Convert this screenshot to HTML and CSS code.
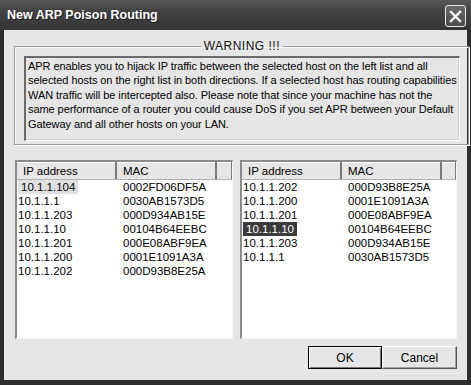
FILE: index.html
```html
<!DOCTYPE html>
<html lang="en">
<head>
    <meta charset="UTF-8">
    <title>New ARP Poison Routing</title>
    <link rel="stylesheet" href="styles.css">
</head>
<body>
<div class="window">
    <div class="titlebar">
        <span class="title">New ARP Poison Routing</span>
        <button class="close" aria-label="Close">
            <svg width="13" height="13" viewBox="0 0 13 13">
                <path d="M2 2 L11 11 M11 2 L2 11" stroke="#fff" stroke-width="2.4" stroke-linecap="square"/>
            </svg>
        </button>
    </div>
    <div class="client">
        <fieldset class="warning">
            <legend>WARNING !!!</legend>
            <div class="notice">
                APR enables you to hijack IP traffic between the selected host on the left list and all<br>
                selected hosts on the right list in both directions. If a selected host has routing capabilities<br>
                WAN traffic will be intercepted also. Please note that since your machine has not the<br>
                same performance of a router you could cause DoS if you set APR between your Default<br>
                Gateway and all other hosts on your LAN.
            </div>
        </fieldset>

        <div class="lists">
            <div class="listview" id="left-list"></div>
            <div class="listview" id="right-list"></div>
        </div>

        <div class="buttons">
            <button class="btn default">OK</button>
            <button class="btn">Cancel</button>
        </div>
    </div>
</div>

<script>
const leftHosts = [
    ["10.1.1.104", "0002FD06DF5A"],
    ["10.1.1.1", "0030AB1573D5"],
    ["10.1.1.203", "000D934AB15E"],
    ["10.1.1.10", "00104B64EEBC"],
    ["10.1.1.201", "000E08ABF9EA"],
    ["10.1.1.200", "0001E1091A3A"],
    ["10.1.1.202", "000D93B8E25A"]
];
const rightHosts = [
    ["10.1.1.202", "000D93B8E25A"],
    ["10.1.1.200", "0001E1091A3A"],
    ["10.1.1.201", "000E08ABF9EA"],
    ["10.1.1.10", "00104B64EEBC"],
    ["10.1.1.203", "000D934AB15E"],
    ["10.1.1.1", "0030AB1573D5"]
];

function fillList(id, hosts, selected, focused) {
    const list = document.getElementById(id);
    list.innerHTML = `
        <div class="lv-header">
            <div class="col ip">IP address</div>
            <div class="col mac">MAC</div>
            <div class="col rest"></div>
        </div>
    ` + hosts.map((h, i) => `
        <div class="lv-row">
            <div class="cell ip"><span class="${i === selected ? (focused ? 'sel focus' : 'sel') : ''}">${h[0]}</span></div>
            <div class="cell mac">${h[1]}</div>
        </div>
    `).join('');
}

fillList("left-list", leftHosts, 0, false);
fillList("right-list", rightHosts, 3, true);
</script>
</body>
</html>
```

FILE: styles.css
```css
body {
    margin: 0;
    font-family: "Liberation Sans", Arial, sans-serif;
    font-size: 11px;
    color: #000;
    background: #fff;
}
.window {
    width: 471px;
    height: 385px;
    display: flex;
    flex-direction: column;
    background: #2e2e2e;
    box-sizing: border-box;
}
.titlebar {
    height: 30px;
    flex: none;
    display: flex;
    align-items: center;
    justify-content: space-between;
    padding: 0 5px 0 7px;
    background: linear-gradient(#5a5a5a, #454545 30%, #3c3c3c 70%, #333);
}
.title {
    color: #fff;
    font-weight: bold;
    font-size: 12.5px;
    text-shadow: 1px 1px 0 #1e1e1e;
}
.close {
    width: 21px;
    height: 22px;
    margin-top: 2px;
    padding: 0;
    border: 1px solid #e8e8e8;
    border-radius: 3px;
    background: linear-gradient(#6a6a6a, #4a4a4a);
    display: flex;
    align-items: center;
    justify-content: center;
}
.client {
    flex: 1;
    margin: 0 4px 5px 4px;
    background: #e6e6e6;
    padding: 9px 10px 0 10px;
    display: flex;
    flex-direction: column;
}
.warning {
    margin: 0;
    padding: 3px 8px 8px 9px;
    border: 1px solid #9a9a9a;
    box-shadow: inset 1px 1px 0 #fff, 1px 1px 0 #fff;
    height: 106px;
    box-sizing: border-box;
}
.warning legend {
    margin: 0 auto;
    padding: 0 3px;
    font-size: 12px;
    letter-spacing: 0.5px;
    color: #111;
}
.notice {
    height: 85px;
    box-sizing: border-box;
    border-top: 2px solid #6a6a6a;
    border-left: 2px solid #6a6a6a;
    border-right: 1px solid #fff;
    border-bottom: 1px solid #fff;
    box-shadow: inset -1px -1px 0 #d0d0d0;
    padding: 1px 2px;
    line-height: 14.4px;
    font-size: 11px;
    letter-spacing: -0.07px;
    white-space: nowrap;
    overflow: hidden;
}
.lists {
    margin-top: 15px;
    margin-left: 1px;
    display: grid;
    grid-template-columns: 218px 217px;
    gap: 7px;
}
.listview {
    height: 179px;
    box-sizing: border-box;
    background: #fff;
    border-top: 2px solid #8a8a8a;
    border-left: 2px solid #8a8a8a;
    border-right: 1px solid #f4f4f4;
    border-bottom: 1px solid #f4f4f4;
    overflow: hidden;
}
.lv-header {
    display: flex;
    height: 17px;
    background: #e6e6e6;
    border-bottom: 1px solid #b0b0b0;
    box-shadow: inset 0 1px 0 #fff;
}
.lv-header .col {
    box-sizing: border-box;
    padding: 3px 0 0 6px;
    border-right: 2px solid #7a7a7a;
    font-size: 11.5px;
}
.lv-header .col.rest {
    flex: 1;
    border-right: 1px solid #7a7a7a;
}
.ip {
    width: 100px;
    flex: none;
}
.mac {
    width: 100px;
    flex: none;
}
.lv-row {
    display: flex;
    height: 14px;
    line-height: 14px;
    font-size: 11.5px;
}
.lv-row:first-of-type {
    margin-top: 1px;
}
.lv-row .cell {
    box-sizing: border-box;
}
.lv-row .cell.ip {
    padding-left: 1px;
}
.lv-row .cell.mac {
    padding-left: 6px;
}
.lv-row .sel {
    display: inline-block;
    padding: 0 3px;
    background: #e0e0e0;
}
.lv-row .sel.focus {
    background: #3a3a3a;
    color: #fff;
}
.buttons {
    display: flex;
    justify-content: flex-end;
    margin-top: 7px;
}
.btn {
    width: 75px;
    height: 23px;
    font-family: "Liberation Sans", Arial, sans-serif;
    font-size: 12px;
    background: #e6e6e6;
    border: 1px solid #fff;
    border-right-color: #555;
    border-bottom-color: #555;
    box-shadow: inset -1px -1px 0 #a0a0a0;
    padding: 0;
}
.btn.default {
    width: 74px;
    border: 1px solid #000;
    box-shadow: inset 1px 1px 0 #fff, inset -1px -1px 0 #777;
}
```
